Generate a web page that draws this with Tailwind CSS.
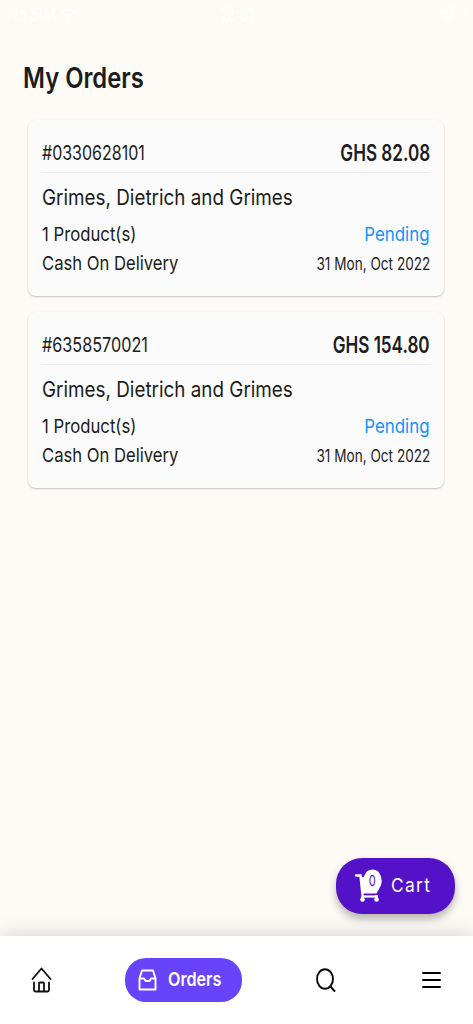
<!DOCTYPE html>
<html lang="en">
<head>
<meta charset="utf-8">
<title>My Orders</title>
<script src="https://cdn.jsdelivr.net/npm/@tailwindcss/browser@4"></script>
</head>
<body class="bg-[#fefaf5]">
<div class="relative flex h-[1024px] w-[473px] flex-col overflow-hidden bg-[#fefaf5] font-['Inter',sans-serif] text-[#1c1c1c] whitespace-nowrap">
  <header class="grid h-[30px] grid-cols-3 items-center pl-2 pr-[6px] text-[18px] leading-[30px] text-white">
    <div class="flex items-center">
      <span class="w-[52px]"><span class="inline-block origin-left scale-x-[0.77]">No SIM</span></span>
      <svg class="h-[15px] w-[17px]" viewBox="0 0 17 15" fill="none" stroke="#fff" stroke-width="3"><path d="M.8 5.5Q8.5-2 16.200 5.500M3.700 9Q8.500 4.500 13.300 9"/><path d="M5.500 11.500Q8.500 9 11.500 11.500L8.500 15Z" fill="#fff" stroke="none"/></svg>
    </div>
    <span class="text-center font-semibold"><span class="inline-block scale-x-[0.77]">12:01</span></span>
    <svg class="h-[17px] w-[28px] justify-self-end" viewBox="0 0 28 17"><rect x=".5" y=".5" width="25" height="16" rx="4" fill="none" stroke="#fffdfa"/><rect x="2" y="3" width="12" height="11" rx="2" fill="#fff"/><path d="M27 6v5" stroke="#fffdfa"/></svg>
  </header>

  <h1 class="mt-[28px] pl-[23px] text-[28px] font-semibold leading-[40px]"><span class="inline-block origin-left scale-x-[0.85]">My Orders</span></h1>

  <main class="mt-[22px] flex flex-col gap-4 pl-[28px] pr-[29px]">
    <article class="h-[176px] rounded-[8px] bg-[#fbfbfb] px-[14px] pt-[14px] shadow-[0_1px_2px_rgba(0,0,0,0.22)]">
      <div class="flex h-[39px] items-center justify-between border-b border-[#ececec]">
        <span class="origin-left scale-x-[0.8] text-[20px] font-[370]">#0330628101</span>
        <span class="origin-right scale-x-[0.76] text-[22.500px] font-semibold">GHS 82.08</span>
      </div>
      <div class="mt-2 flex h-8 items-center"><span class="origin-left scale-x-[0.877] text-[21.500px] font-[370]">Grimes, Dietrich and Grimes</span></div>
      <div class="mt-[7px] flex h-[30px] items-center justify-between text-[19px] font-[370]">
        <span class="origin-left scale-x-[0.88]">1 Product(s)</span>
        <span class="origin-right scale-x-[0.89] pr-px text-[#1296f8]">Pending</span>
      </div>
      <div class="flex h-[29px] items-center justify-between text-[19px] font-[370]">
        <span class="origin-left scale-x-[0.875]">Cash On Delivery</span>
        <span class="origin-right scale-x-[0.8] text-[17px]">31 Mon, Oct 2022</span>
      </div>
    </article>
    <article class="h-[176px] rounded-[8px] bg-[#fbfbfb] px-[14px] pt-[14px] shadow-[0_1px_2px_rgba(0,0,0,0.22)]">
      <div class="flex h-[39px] items-center justify-between border-b border-[#ececec]">
        <span class="origin-left scale-x-[0.81] text-[20px] font-[370]">#6358570021</span>
        <span class="origin-right scale-x-[0.76] text-[22.500px] font-semibold">GHS 154.80</span>
      </div>
      <div class="mt-2 flex h-8 items-center"><span class="origin-left scale-x-[0.877] text-[21.500px] font-[370]">Grimes, Dietrich and Grimes</span></div>
      <div class="mt-[7px] flex h-[30px] items-center justify-between text-[19px] font-[370]">
        <span class="origin-left scale-x-[0.88]">1 Product(s)</span>
        <span class="origin-right scale-x-[0.89] pr-px text-[#1296f8]">Pending</span>
      </div>
      <div class="flex h-[29px] items-center justify-between text-[19px] font-[370]">
        <span class="origin-left scale-x-[0.875]">Cash On Delivery</span>
        <span class="origin-right scale-x-[0.8] text-[17px]">31 Mon, Oct 2022</span>
      </div>
    </article>
  </main>

  <button class="absolute right-[18.500px] bottom-[110px] flex h-[56px] w-[119px] items-center rounded-[26px] bg-[#5412c8] pl-[19px] text-white shadow-[0_5px_9px_rgba(0,0,0,0.28)]">
    <svg class="h-[34px] w-[29px] shrink-0" viewBox="0 0 29 34" fill="none" stroke="#fff"><path d="M1 6.500H5.500L7.500 25" stroke-width="2.500" stroke-linecap="round"/><path d="M6 8H20L24 20 21.500 24.500H7.500Z" fill="#fff" stroke="none"/><path d="M7 27.500H23" stroke-width="2.200"/><circle cx="7.500" cy="30.500" r="2.300" fill="#fff" stroke="none"/><circle cx="21.500" cy="30.500" r="2.300" fill="#fff" stroke="none"/><path d="M7.500 26v4M21.500 26v4" stroke-width="2.500"/><ellipse cx="17.500" cy="11.800" rx="9.300" ry="11.300" fill="#fff" stroke="none"/><text x="17.200" y="17" text-anchor="middle" font-size="14.500" textLength="7" lengthAdjust="spacingAndGlyphs" fill="#5412c8" stroke="none">0</text></svg>
    <span class="ml-[7px] origin-left scale-x-[0.91] text-[19px] tracking-[1.500px]">Cart</span>
  </button>

  <nav class="absolute inset-x-0 bottom-0 flex h-[88px] items-center bg-white shadow-[0_0_20px_rgba(0,0,0,0.18)]">
    <svg class="ml-[31px] h-[26px] w-[21px]" viewBox="0 0 21 26" fill="none" stroke="#111" stroke-width="1.800" stroke-linecap="round" stroke-linejoin="round"><path d="M1.500 12 10.500 1.500 19.500 12M3 15.500V23Q3 24.500 4.500 24.500H16.500Q18 24.500 18 23V15.500M8 24V16.500Q8 15.500 9 15.500H12Q13 15.500 13 16.500V24"/></svg>
    <div class="ml-[73px] flex h-[44px] w-[117px] items-center rounded-[21px] bg-[#6743fb] pl-[13px] text-white">
      <svg class="h-[22px] w-[19px] shrink-0" viewBox="0 0 19 22" fill="none" stroke="#fff" stroke-width="1.900" stroke-linejoin="round"><path d="M4 1.500H15L17.500 9.500V20.500H1.500V9.500ZM1.500 9.500H6L7.500 12H11.500L13 9.500H17.500"/></svg>
      <span class="ml-[11px] origin-left scale-x-[0.85] text-[19px] font-semibold">Orders</span>
    </div>
    <svg class="ml-[74px] h-[24px] w-[20px]" viewBox="0 0 20 24" fill="none" stroke="#0a0a0a" stroke-width="1.900" stroke-linecap="round"><ellipse cx="9" cy="11" rx="8" ry="9.800"/><path d="M14.500 18.500 18.500 23"/></svg>
    <svg class="ml-[86px] h-[18px] w-[19px]" viewBox="0 0 19 18" fill="none" stroke="#000" stroke-width="2" stroke-linecap="round"><path d="M1 2H18M1 9H18M1 16H18"/></svg>
  </nav>
</div>
</body>
</html>
